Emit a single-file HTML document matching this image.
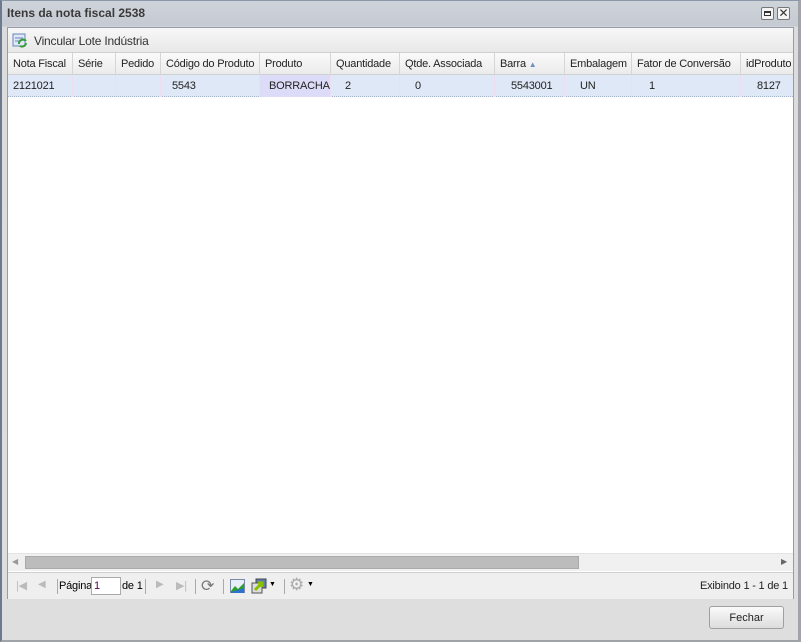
<!DOCTYPE html>
<html><head><style>
*{margin:0;padding:0;box-sizing:border-box}
body{width:801px;height:642px;overflow:hidden;font-family:"Liberation Sans",Arial,sans-serif;font-size:11px;color:#000;background:#d4d7dc;position:relative}
.win{position:absolute;left:0;top:0;width:801px;height:642px;background:linear-gradient(#cfd3da,#c5cad2 25px,#dcdcdc 26px,#dedede);border-left:2px solid #6b7a8c;border-top:1px solid #8a97a8;border-right:3px solid #a0a4a8;border-bottom:2px solid #a0a4a8}
.title{position:absolute;left:5px;top:5px;font-weight:bold;font-size:12px;color:#3a3a3a}
.tb{position:absolute;top:6px;width:13px;height:13px;border:1px solid #777;background:#f4f4f4;border-radius:2px}
.panel{position:absolute;left:5px;top:26px;width:787px;height:572px;background:#fff;border:1px solid #99a;letter-spacing:-0.2px}
.toolbar{height:25px;background:linear-gradient(#f7f7f7,#e8e8e8);border-bottom:1px solid #d0d0d0;position:relative}
.hdr{position:absolute;top:25px;left:0;right:0;height:22px;background:linear-gradient(#fafafa,#ebebeb);border-bottom:1px solid #d0d0d0}
.row{position:absolute;top:47px;left:0;right:0;height:22px;background:#dfe8f6;border-bottom:1px dotted #a8b8d0}
.c{position:absolute;top:0;height:22px;line-height:22px;padding-left:5px;white-space:nowrap;overflow:hidden;color:#222;border-right:1px solid #d6d6d6}
.row .c{border-right:1px solid #ede;}
.sb{position:absolute;top:525px;left:0;right:0;height:18px;background:#f0f0f0;border-top:1px solid #e4e4e4}
.pg{position:absolute;top:544px;left:0;right:0;height:27px;background:#efefef;border-top:1px solid #d0d0d0}
.sep{position:absolute;top:6px;width:1px;height:15px;background:#aaa}
.btn{position:absolute;left:707px;top:605px;width:75px;height:23px;border:1px solid #a0a0a0;border-radius:3px;background:linear-gradient(#fafafa,#e8e8e8 60%,#dcdcdc);text-align:center;line-height:22px;font-size:11px;color:#222}
</style></head><body>
<div class="win">
<div class="title">Itens da nota fiscal 2538</div>
<div class="tb" style="left:759px"><div style="position:absolute;left:2px;top:3px;width:7px;height:5px;border:1px solid #333;border-top-width:2px"></div></div>
<div class="tb" style="left:775px;font-size:12px;line-height:11px;text-align:center;color:#333">✕</div>
<div class="panel">
 <div class="toolbar">
  <svg style="position:absolute;left:4px;top:4px" width="16" height="16"><rect x="1" y="2" width="12" height="12" fill="#dfe8f8" stroke="#6a86b8"/><line x1="3" y1="6" x2="11" y2="6" stroke="#6a86b8"/><line x1="3" y1="9" x2="9" y2="9" stroke="#6a86b8"/><path d="M7 12 a4 4 0 0 1 7-3" stroke="#3a9a3a" stroke-width="2" fill="none"/><path d="M14 11 a4 4 0 0 1-6 3" stroke="#3a9a3a" stroke-width="2" fill="none"/></svg>
  <span style="position:absolute;left:26px;top:6px;font-size:12px;color:#333">Vincular Lote Indústria</span>
 </div>
 <div class="hdr">
  <div class="c" style="left:0;width:65px">Nota Fiscal</div>
  <div class="c" style="left:65px;width:43px">Série</div>
  <div class="c" style="left:108px;width:45px">Pedido</div>
  <div class="c" style="left:153px;width:99px">Código do Produto</div>
  <div class="c" style="left:252px;width:71px">Produto</div>
  <div class="c" style="left:323px;width:69px">Quantidade</div>
  <div class="c" style="left:392px;width:95px">Qtde. Associada</div>
  <div class="c" style="left:487px;width:70px">Barra <span style="color:#6a8fc8;font-size:8px">▲</span></div>
  <div class="c" style="left:557px;width:67px">Embalagem</div>
  <div class="c" style="left:624px;width:109px">Fator de Conversão</div>
  <div class="c" style="left:733px;width:54px;border:none">idProduto</div>
 </div>
 <div class="row">
  <div class="c" style="left:0;width:65px">2121021</div>
  <div class="c" style="left:65px;width:43px"></div>
  <div class="c" style="left:108px;width:45px"></div>
  <div class="c" style="left:153px;width:99px;padding-left:11px">5543</div>
  <div class="c" style="left:252px;width:71px;background:#dcdcf8;padding-left:9px">BORRACHA</div>
  <div class="c" style="left:323px;width:69px;padding-left:14px">2</div>
  <div class="c" style="left:392px;width:95px;padding-left:15px">0</div>
  <div class="c" style="left:487px;width:70px;padding-left:16px">5543001</div>
  <div class="c" style="left:557px;width:67px;padding-left:15px">UN</div>
  <div class="c" style="left:624px;width:109px;padding-left:17px">1</div>
  <div class="c" style="left:733px;width:54px;padding-left:16px;border:none">8127</div>
 </div>
 <div class="sb">
  <span style="position:absolute;left:4px;top:3px;font-size:8px;color:#999">◀</span>
  <div style="position:absolute;left:17px;top:2px;width:554px;height:13px;background:#bcbcbc;border:1px solid #aaa"></div>
  <span style="position:absolute;left:773px;top:3px;font-size:8px;color:#666">▶</span>
 </div>
 <div class="pg">
  <span style="position:absolute;left:8px;top:6px;color:#bbb;font-size:11px">|◀</span>
  <span style="position:absolute;left:30px;top:6px;color:#bbb;font-size:10px">◀</span>
  <div class="sep" style="left:49px"></div>
  <span style="position:absolute;left:51px;top:7px">Página</span>
  <div style="position:absolute;left:83px;top:4px;width:30px;height:18px;border:1px solid #aaa;background:#fff;padding:2px 2px;color:#505">1</div>
  <span style="position:absolute;left:114px;top:7px">de 1</span>
  <div class="sep" style="left:137px"></div>
  <span style="position:absolute;left:148px;top:6px;color:#bbb;font-size:10px">▶</span>
  <span style="position:absolute;left:168px;top:6px;color:#bbb;font-size:11px">▶|</span>
  <div class="sep" style="left:187px"></div>
  <span style="position:absolute;left:193px;top:3px;color:#777;font-size:16px">⟳</span>
  <div class="sep" style="left:215px"></div>
  <svg style="position:absolute;left:222px;top:6px" width="16" height="15"><rect x="0.5" y="0.5" width="14" height="13" fill="#e8eef8" stroke="#7a8aa8"/><path d="M1 12 L5 7 L8 10 L14 4 L14 14 L1 14Z" fill="#2aa02a"/><path d="M1 13 L14 9 L14 14 L1 14Z" fill="#3070d0"/></svg>
  <svg style="position:absolute;left:243px;top:5px" width="18" height="17"><rect x="5" y="1" width="10" height="9" fill="#6080a8" stroke="#445"/><rect x="1" y="5" width="10" height="10" fill="#ddd" stroke="#555"/><path d="M4 12 L11 5 M7 5 L11 5 L11 9" stroke="#8ac000" stroke-width="3" fill="none"/></svg>
  <span style="position:absolute;left:261px;top:8px;font-size:7px">▼</span>
  <div class="sep" style="left:276px"></div>
  <span style="position:absolute;left:281px;top:2px;color:#aaa;font-size:17px">⚙</span>
  <span style="position:absolute;left:299px;top:8px;font-size:7px">▼</span>
  <span style="position:absolute;left:692px;top:7px;color:#222">Exibindo 1 - 1 de 1</span>
 </div>
</div>
<div class="btn">Fechar</div>
</div>
</body></html>
